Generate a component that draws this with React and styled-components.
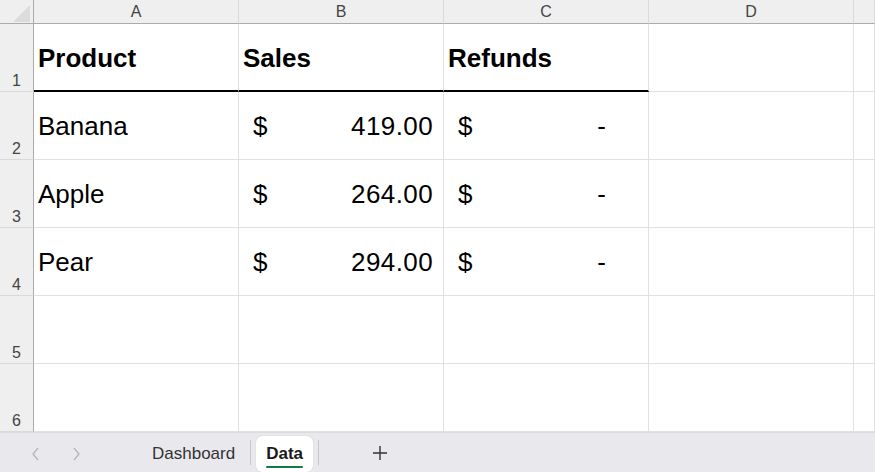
import React from 'react';
import styled, { createGlobalStyle } from 'styled-components';

const GlobalStyle = createGlobalStyle`
  html, body {
    margin: 0;
    padding: 0;
    background: #ffffff;
    overflow: hidden;
  }
  * {
    box-sizing: border-box;
  }
`;

const Page = styled.div`
  width: 875px;
  height: 472px;
  display: flex;
  flex-direction: column;
  font-family: 'Liberation Sans', Arial, sans-serif;
  color: #000;
`;

const Grid = styled.div`
  display: grid;
  grid-template-columns: 34px repeat(4, 205px) 1fr;
  grid-template-rows: 24px repeat(6, 68px);
  flex: 0 0 auto;
  overflow: hidden;
`;

const Corner = styled.div`
  position: relative;
  background: #efefef;
  border-right: 1px solid #ababab;
  border-bottom: 1px solid #ababab;
`;

const CornerTriangle = styled.svg`
  position: absolute;
  left: 13px;
  top: 5px;
`;

const ColHead = styled.div`
  background: #efefef;
  border-right: 1px solid #dadada;
  border-bottom: 1px solid #ababab;
  display: flex;
  align-items: center;
  justify-content: center;
  font-size: 16px;
  color: #444;
  padding-top: 1px;
`;

const RowHead = styled.div`
  background: #efefef;
  border-right: 1px solid #ababab;
  border-bottom: 1px solid #dadada;
  display: flex;
  align-items: flex-end;
  justify-content: center;
  font-size: 16px;
  color: #444;
  padding-bottom: 1px;
`;

const Cell = styled.div`
  border-right: 1px solid #e1e1e1;
  border-bottom: ${p => (p.$heading ? '2px solid #000' : '1px solid #e1e1e1')};
  display: flex;
  align-items: center;
  padding: ${p => (p.$heading ? '2px 4px 0' : '1px 4px 0')};
  font-size: 26px;
  font-weight: ${p => (p.$bold ? 700 : 400)};
  white-space: nowrap;
`;

const Money = styled(Cell)`
  justify-content: space-between;
  padding-left: 14px;
  padding-right: ${p => (p.$dash ? '42px' : '10px')};
  letter-spacing: ${p => (p.$dash ? '0' : '0.4px')};
`;

const TabBar = styled.div`
  flex: 1;
  background: #e9e8ed;
  border-top: 1px solid #dcdcdc;
  display: flex;
  align-items: center;
  font-family: 'Liberation Sans', Arial, sans-serif;
`;

const NavButton = styled.div`
  width: 40px;
  display: flex;
  justify-content: center;
  color: #b4b4b8;
  padding-top: 3px;
`;

const NavGroup = styled.div`
  display: flex;
  padding-left: 16px;
  margin-right: 46px;
`;

const Tab = styled.div`
  position: relative;
  height: 36px;
  margin-top: 2px;
  padding: 0 10px;
  display: flex;
  align-items: center;
  font-size: 17px;
  color: ${p => (p.$active ? '#1a1a1a' : '#333')};
  font-weight: ${p => (p.$active ? 700 : 400)};
  background: ${p => (p.$active ? '#ffffff' : 'transparent')};
  border-radius: 6px;
  box-shadow: ${p => (p.$active ? '0 0 1px rgba(0,0,0,0.25)' : 'none')};
`;

const Underline = styled.div`
  position: absolute;
  left: 10px;
  right: 10px;
  bottom: 4px;
  height: 2px;
  background: #107c41;
  border-radius: 1px;
`;

const Separator = styled.div`
  width: 1px;
  height: 25px;
  background: #c8c8cc;
  margin: 0 5px;
`;

const AddButton = styled.div`
  margin-left: 48px;
  display: flex;
  align-items: center;
  color: #333;
`;

const rows = [
  { name: 'Banana', sales: '419.00' },
  { name: 'Apple', sales: '264.00' },
  { name: 'Pear', sales: '294.00' },
];

const cols = ['A', 'B', 'C', 'D', ''];

export default function App() {
  return (
    <Page>
      <GlobalStyle />
      <Grid>
        <Corner>
          <CornerTriangle width="18" height="18" viewBox="0 0 18 18">
            <polygon points="0,17 17,17 17,0" fill="#dcdcdc" />
          </CornerTriangle>
        </Corner>
        {cols.map((c, i) => (
          <ColHead key={i}>{c}</ColHead>
        ))}

        <RowHead>1</RowHead>
        <Cell $heading $bold>Product</Cell>
        <Cell $heading $bold>Sales</Cell>
        <Cell $heading $bold>Refunds</Cell>
        <Cell />
        <Cell />

        {rows.map((r, i) => (
          <React.Fragment key={r.name}>
            <RowHead>{i + 2}</RowHead>
            <Cell>{r.name}</Cell>
            <Money>
              <span>$</span>
              <span>{r.sales}</span>
            </Money>
            <Money $dash>
              <span>$</span>
              <span>-</span>
            </Money>
            <Cell />
            <Cell />
          </React.Fragment>
        ))}

        {[5, 6].map(n => (
          <React.Fragment key={n}>
            <RowHead>{n}</RowHead>
            <Cell />
            <Cell />
            <Cell />
            <Cell />
            <Cell />
          </React.Fragment>
        ))}
      </Grid>

      <TabBar>
        <NavGroup>
          <NavButton>
            <svg width="12" height="16" viewBox="0 0 12 16">
              <path d="M8 2 L3 8 L8 14" fill="none" stroke="currentColor" strokeWidth="1.3" />
            </svg>
          </NavButton>
          <NavButton>
            <svg width="12" height="16" viewBox="0 0 12 16">
              <path d="M4 2 L9 8 L4 14" fill="none" stroke="currentColor" strokeWidth="1.3" />
            </svg>
          </NavButton>
        </NavGroup>
        <Tab>Dashboard</Tab>
        <Separator />
        <Tab $active>
          Data
          <Underline />
        </Tab>
        <Separator />
        <AddButton>
          <svg width="16" height="16" viewBox="0 0 16 16">
            <path d="M8 1 V15 M1 8 H15" stroke="currentColor" strokeWidth="1.4" />
          </svg>
        </AddButton>
      </TabBar>
    </Page>
  );
}
